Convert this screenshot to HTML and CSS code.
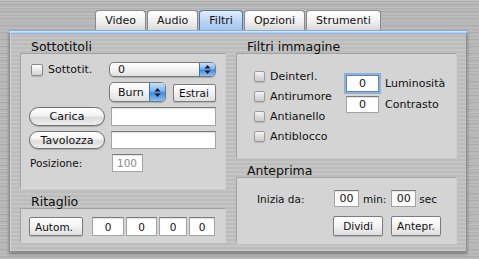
FILE: index.html
```html
<!DOCTYPE html>
<html lang="it">

<head>
    <meta charset="UTF-8">
    <title>Filtri</title>
    <link rel="stylesheet" href="styles.css">
</head>

<body>
    <div class="tabs">
        <span class="tab">Video</span>
        <span class="tab">Audio</span>
        <span class="tab active">Filtri</span>
        <span class="tab">Opzioni</span>
        <span class="tab">Strumenti</span>
    </div>

    <div class="panel">
        <div class="bar"></div>
        <div class="panel-body">

            <div class="col">
                <div class="group-title">Sottotitoli</div>
                <div class="group-box subs">
                    <label class="check"><span class="box"></span>Sottotit.</label>
                    <div class="popup small">
                        <span class="popup-text">0</span>
                        <span class="arrows"><svg width="7" height="9" viewBox="0 0 7 9"><path d="M3.5 0 L6.5 3.5 H0.5Z M0.5 5.5 H6.5 L3.5 9Z" fill="#1a1a1a"/></svg></span>
                    </div>

                    <span></span>
                    <div class="pair">
                        <div class="popup burn">
                            <span class="popup-text">Burn</span>
                            <span class="arrows"><svg width="7" height="9" viewBox="0 0 7 9"><path d="M3.5 0 L6.5 3.5 H0.5Z M0.5 5.5 H6.5 L3.5 9Z" fill="#1a1a1a"/></svg></span>
                        </div>
                        <span class="btn estrai">Estrai</span>
                    </div>

                    <span class="pill">Carica</span>
                    <span class="field wide"></span>

                    <span class="pill">Tavolozza</span>
                    <span class="field wide"></span>

                    <span class="label">Posizione:</span>
                    <span class="field pos">100</span>
                </div>

                <div class="group-title next">Ritaglio</div>
                <div class="group-box crop">
                    <span class="btn autom">Autom.</span>
                    <div class="crop-fields">
                        <span class="field num w32">0</span>
                        <span class="field num w31">0</span>
                        <span class="field num w28">0</span>
                        <span class="field num w26">0</span>
                    </div>
                </div>
            </div>

            <div class="col">
                <div class="group-title">Filtri immagine</div>
                <div class="group-box filters">
                    <div class="checks">
                        <label class="check grey"><span class="box"></span>Deinterl.</label>
                        <label class="check grey"><span class="box"></span>Antirumore</label>
                        <label class="check grey"><span class="box"></span>Antianello</label>
                        <label class="check grey"><span class="box"></span>Antiblocco</label>
                    </div>
                    <div class="levels">
                        <div class="level"><span class="field num lvl focus">0</span>Luminosità</div>
                        <div class="level"><span class="field num lvl">0</span>Contrasto</div>
                    </div>
                </div>

                <div class="group-title next">Anteprima</div>
                <div class="group-box preview">
                    <div class="start">
                        <span class="start-label">Inizia da:</span>
                        <span class="field num time">00</span>
                        <span class="unit">min:</span>
                        <span class="field num time">00</span>
                        <span class="unit sec">sec</span>
                    </div>
                    <div class="actions">
                        <span class="btn action">Dividi</span>
                        <span class="btn action">Antepr.</span>
                    </div>
                </div>
            </div>

        </div>
    </div>
</body>

</html>
```

FILE: styles.css
```css
* {
    box-sizing: border-box;
}

body {
    margin: 0;
    width: 479px;
    height: 259px;
    overflow: hidden;
    font-family: "DejaVu Sans", "Noto Sans", sans-serif;
    font-size: 10.5px;
    color: #111;
    background-color: #b6b6b6;
    background-image: repeating-linear-gradient(180deg, rgba(255, 255, 255, .12) 0 1px, rgba(0, 0, 0, .03) 1px 2px, rgba(255, 255, 255, .05) 2px 4px, rgba(0, 0, 0, .06) 4px 5px, rgba(255, 255, 255, .02) 5px 7px);
}

/* tabs */

.tabs {
    display: flex;
    justify-content: center;
    gap: 1px;
    height: 20px;
    margin: 10px 12px 0 9px;
}

.tab {
    padding: 0 9px;
    line-height: 19px;
    font-size: 11px;
    border: 1px solid #8a8a8a;
    border-bottom: none;
    border-radius: 4px 4px 0 0;
    background: linear-gradient(#ffffff, #f0f0f0 55%, #dadada);
}

.tab.active {
    border-color: #4d78b6;
    background: linear-gradient(#e3effc, #bdd6f4 50%, #a2c4ee);
}

/* panel */

.panel {
    height: 222px;
    margin: 0 12px 0 9px;
    border: 1px solid #8e8e8e;
    border-top: none;
    background-color: #c2c2c2;
    background-image: repeating-linear-gradient(180deg, rgba(255, 255, 255, .08) 0 1px, rgba(0, 0, 0, .03) 1px 3px, rgba(255, 255, 255, .04) 3px 4px);
    box-shadow: 0 2px 3px rgba(0, 0, 0, .35), inset 1px 0 0 rgba(255, 255, 255, .3);
}

.bar {
    height: 4px;
    margin: 0 -1px;
    border-radius: 2px;
    background: linear-gradient(#5c88cf, #d6e7fb 35%, #b1cff4 70%, #6a95d2);
}

.panel-body {
    display: grid;
    grid-template-columns: 206px 221px;
    column-gap: 10px;
    padding: 6px 9px 0 10px;
}

.group-title {
    padding-left: 11px;
    margin-bottom: -1px;
    font-size: 12.5px;
    line-height: 14px;
    color: #0c0c0c;
}

.group-title.next {
    margin-top: 6px;
}

.group-box {
    border: 1px solid #a2a2a2;
    border-right-color: #cfcfcf;
    border-bottom-color: #d9d9d9;
    background: #d4d4d4;
}

/* common controls */

.check {
    display: flex;
    align-items: center;
    gap: 5px;
}

.box {
    width: 12px;
    height: 12px;
    border: 1px solid #8a8a8a;
    border-radius: 2px;
    background: linear-gradient(#ffffff, #e8e8e8 50%, #d4d4d4);
    box-shadow: 0 1px 1px rgba(0, 0, 0, .15);
}

.check.grey .box {
    width: 11px;
    height: 11px;
    border-color: #9c9c9c;
    background: linear-gradient(#f6f6f6, #dedede 50%, #cbcbcb);
}

.field {
    display: flex;
    align-items: center;
    padding: 0 4px;
    background: #fff;
    border: 1px solid #a4a4a4;
    border-top-color: #7a7a7a;
    box-shadow: inset 0 1px 1px rgba(0, 0, 0, .12);
}

.field.num {
    justify-content: center;
}

.btn {
    display: flex;
    align-items: center;
    padding: 0 5px;
    border: 1px solid #7c7c7c;
    border-radius: 2px;
    background: linear-gradient(#ffffff, #f3f3f3 50%, #dedede);
    box-shadow: 0 1px 1px rgba(0, 0, 0, .15);
}

.pill {
    display: flex;
    align-items: center;
    justify-content: center;
    border: 1px solid #6f6f6f;
    border-radius: 10px;
    background: linear-gradient(#ffffff, #f4f4f4 45%, #dcdcdc 55%, #efefef);
    box-shadow: 0 1px 1px rgba(0, 0, 0, .2);
    font-size: 11px;
}

.popup {
    display: flex;
    align-items: stretch;
    border: 1px solid #7a7a7a;
    border-radius: 5px;
    overflow: hidden;
    background: linear-gradient(#ffffff, #f2f2f2 50%, #e0e0e0);
    box-shadow: 0 1px 1px rgba(0, 0, 0, .2);
}

.popup-text {
    flex: 1;
    display: flex;
    align-items: center;
    padding-left: 8px;
    font-size: 11px;
}

.arrows {
    width: 16px;
    display: flex;
    align-items: center;
    justify-content: center;
    border-left: 1px solid #3f72b8;
    background: linear-gradient(#c8e0fb, #7fb3ee 45%, #3f88e0 55%, #8cc2f6);
}

/* sottotitoli */

.subs {
    height: 136px;
    display: grid;
    grid-template-columns: 76px 107px;
    grid-template-rows: 15px 20px 19px 18px 18px;
    column-gap: 4px;
    row-gap: 5px;
    padding: 8px 0 0 8px;
}

.subs .check {
    padding-left: 2px;
    font-size: 11px;
}

.pair {
    display: flex;
    justify-content: space-between;
    align-items: flex-end;
}

.burn {
    width: 57px;
    height: 20px;
}

.estrai {
    width: 43px;
    height: 18px;
}

.wide {
    margin-left: 2px;
}

.label {
    display: flex;
    align-items: center;
    padding-left: 1px;
}

.pos {
    width: 31px;
    margin-left: 3px;
    color: #8a8a8a;
}

/* ritaglio */

.crop {
    height: 35px;
    display: flex;
    padding: 8px 0 0 8px;
}

.autom {
    width: 54px;
    height: 19px;
}

.crop-fields {
    display: flex;
    gap: 2px;
    margin-left: 9px;
    height: 19px;
}

.w32 { width: 32px; }
.w31 { width: 31px; }
.w28 { width: 28px; }
.w26 { width: 26px; }

/* filtri immagine */

.filters {
    height: 105px;
    display: flex;
    padding: 12px 0 0 17px;
}

.checks {
    width: 92px;
}

.checks .check {
    height: 20px;
    font-size: 11px;
}

.levels {
    display: flex;
    flex-direction: column;
    gap: 4px;
    margin-top: 9px;
}

.level {
    display: flex;
    align-items: center;
    gap: 6px;
    font-size: 11px;
}

.lvl {
    width: 33px;
    height: 17px;
}

.lvl.focus {
    border-color: #5f87bd;
    box-shadow: 0 0 0 2px #8eb1dc;
}

/* anteprima */

.preview {
    height: 67px;
    padding: 12px 0 0 20px;
}

.start {
    display: flex;
    align-items: center;
    height: 17px;
}

.start-label {
    width: 77px;
}

.time {
    width: 25px;
    height: 17px;
    font-size: 11px;
}

.unit {
    margin: 0 5px 0 4px;
}

.unit.sec {
    margin: 0 0 0 3px;
}

.actions {
    display: flex;
    gap: 8px;
    margin-top: 9px;
    padding-left: 76px;
}

.action {
    width: 50px;
    height: 20px;
    justify-content: center;
}
```
